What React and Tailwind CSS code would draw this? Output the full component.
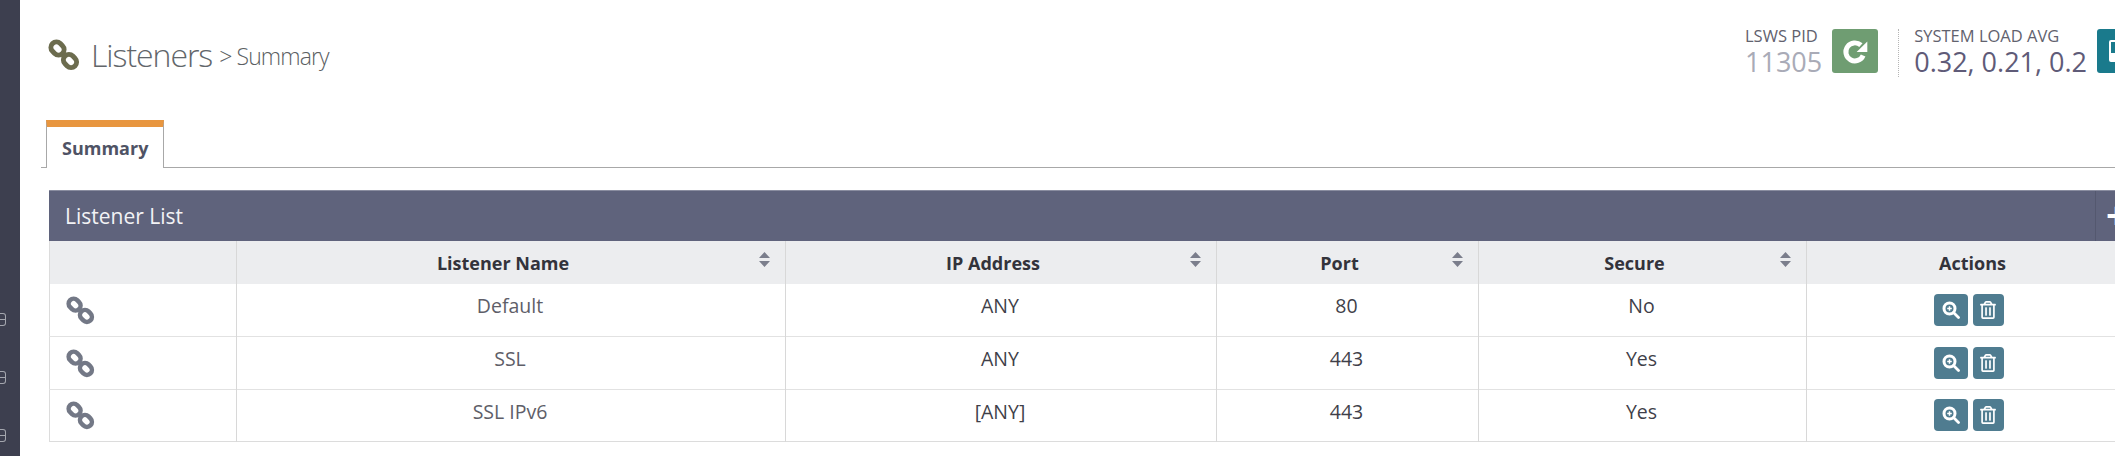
import { FaRegTrashAlt } from 'react-icons/fa';

const listeners = [
  { name: 'Default', ip: 'ANY', port: '80', secure: 'No' },
  { name: 'SSL', ip: 'ANY', port: '443', secure: 'Yes' },
  { name: 'SSL IPv6', ip: '[ANY]', port: '443', secure: 'Yes' },
];

function LinkIcon({ className }) {
  return (
    <svg viewBox="0 0 32 32" className={className} fill="none" stroke="currentColor" strokeWidth="5">
      <rect x="2.5" y="4" width="14" height="11" rx="5.5" transform="rotate(45 9.5 9.5)" />
      <rect x="15" y="16.5" width="14" height="11" rx="5.5" transform="rotate(45 22 22)" />
    </svg>
  );
}

function RefreshIcon() {
  return (
    <svg viewBox="0 0 24 24" className="h-[27px] w-[27px]">
      <path d="M18.8 15.5A8 8 0 1 1 16.8 6.4" fill="none" stroke="white" strokeWidth="4.4" />
      <path d="M22.5 3v9.5H13z" fill="white" />
    </svg>
  );
}

function SortIcon() {
  return (
    <svg viewBox="0 0 11 15" className="absolute right-[15px] top-[11px] h-[15px] w-[11px] fill-[#7b7e8c]">
      <path d="M5.5 0 11 6H0zM0 9h11l-5.5 6z" />
    </svg>
  );
}

function ZoomIcon() {
  return (
    <svg viewBox="0 0 18 18" className="h-[18px] w-[18px]" fill="none" stroke="white">
      <circle cx="7.5" cy="7.5" r="5.5" strokeWidth="3" />
      <path d="M5.2 7.5h4.6M7.5 5.2v4.6" strokeWidth="1.5" />
      <path d="m11.5 11.5 5 5" strokeWidth="2.8" strokeLinecap="round" />
    </svg>
  );
}

function SidebarIcon() {
  return (
    <div className="flex h-[13px] w-[6px] items-center rounded-r-[3px] border-y border-r border-[#a4a6ae]">
      <div className="h-px w-[5px] bg-[#a4a6ae]"></div>
    </div>
  );
}

export default function App() {
  return (
    <div className="flex h-[456px] w-[2115px] overflow-hidden bg-white font-['Open_Sans',sans-serif] text-[#4d4d57]">
      <aside className="flex w-[20px] shrink-0 flex-col gap-[45px] bg-[#3d3f4f] pt-[313px]">
        <SidebarIcon />
        <SidebarIcon />
        <SidebarIcon />
      </aside>

      <main className="w-[2130px] shrink-0">
        <header className="flex h-[120px] items-start justify-between pl-[28px] pr-[7px]">
          <div className="flex items-center pt-[35px]">
            <LinkIcon className="h-[32px] w-[32px] text-[#6c6c4e]" />
            <h1 className="ml-[11px] text-[32px] font-light leading-[40px] tracking-[-1.05px] text-[#62666a]">Listeners</h1>
            <span className="ml-[7px] mt-[3px] text-[23px] font-light tracking-[-0.9px] text-[#5c5f63]">&gt; Summary</span>
          </div>

          <div className="flex items-start pt-[26px]">
            <div className="flex flex-col">
              <span className="text-[16.5px] leading-[20px] text-[#62626e]">LSWS PID</span>
              <span className="text-[27px] leading-[32px] text-[#a9abb7]">11305</span>
            </div>
            <button className="ml-[10px] mt-[3px] flex h-[44px] w-[46px] items-center justify-center rounded-[3px] bg-[#6f9d72]">
              <RefreshIcon />
            </button>
            <div className="ml-[20px] mt-[3px] h-[48px] border-l border-dotted border-[#b5b5b5]"></div>
            <div className="ml-[15px] flex flex-col">
              <span className="text-[16.5px] leading-[20px] text-[#62626e]">SYSTEM LOAD AVG</span>
              <span className="text-[27px] leading-[32px] text-[#5f5b78]">0.32, 0.21, 0.2</span>
            </div>
            <button className="ml-[10px] mt-[3px] flex h-[44px] w-[46px] items-center justify-center rounded-[3px] bg-[#1a7a8c]">
              <div className="flex h-[22px] w-[22px] flex-col justify-end rounded-[2px] border-2 border-white">
                <div className="h-[7px] w-[12px] bg-white"></div>
              </div>
            </button>
          </div>
        </header>

        <div className="ml-[21px] h-[48px] border-b border-[#a8a8a8] pl-[5px]">
          <div className="h-[48px] w-[118px] border-x border-[#a8a8a8] border-t-[7px] border-t-[#e8963f] bg-white pl-[15px] pt-[6px] text-[18px] font-bold leading-[30px] text-[#4f5365]">
            Summary
          </div>
        </div>

        <section className="ml-[29px] mt-[22px] w-[2089px]">
          <div className="flex h-[51px] items-center justify-between border-t border-[#8a8da0] bg-[#5f637c] pl-[16px] text-[21px] text-[#f2f2f5]">
            <span className="pt-[1px]">Listener List</span>
            <div className="flex h-full w-[43px] items-center border-l border-[#54586f] pb-[4px] pl-[10px] text-[38px] font-bold leading-none text-white">+</div>
          </div>
          <table className="w-full table-fixed border-collapse border-b border-l border-[#dcdcdc] text-center text-[19.5px] text-[#3f3f49]">
            <thead>
              <tr className="h-[43px] bg-[#ecedef] text-[18px] font-bold text-[#33333b]">
                <th className="w-[187px] border-r border-[#d8d8d8]"></th>
                <th className="relative w-[549px] border-r border-[#d8d8d8] pr-[16px] pt-[1px]">Listener Name<SortIcon /></th>
                <th className="relative w-[431px] border-r border-[#d8d8d8] pr-[16px] pt-[1px]">IP Address<SortIcon /></th>
                <th className="relative w-[262px] border-r border-[#d8d8d8] pr-[16px] pt-[1px]">Port<SortIcon /></th>
                <th className="relative w-[328px] border-r border-[#d8d8d8] pr-[16px] pt-[1px]">Secure<SortIcon /></th>
                <th className="pt-[1px]">Actions</th>
              </tr>
            </thead>
            <tbody>
              {listeners.map((l) => (
                <tr key={l.name} className="h-[52.5px] border-b border-[#e2e2e2] last:border-b-0">
                  <td className="border-r border-[#d8d8d8] pl-[16px] pt-[1px]">
                    <LinkIcon className="h-[29px] w-[29px] text-[#737886]" />
                  </td>
                  <td className="border-r border-[#d8d8d8] pb-[8px] pr-[2px] text-[#5e5e68]">{l.name}</td>
                  <td className="border-r border-[#d8d8d8] pb-[8px] pr-[2px]">{l.ip}</td>
                  <td className="border-r border-[#d8d8d8] pb-[8px] pr-[2px]">{l.port}</td>
                  <td className="border-r border-[#d8d8d8] pb-[8px] pr-[2px]">{l.secure}</td>
                  <td>
                    <div className="flex justify-center gap-[5px] pr-[8px]">
                      <button className="flex h-[32px] w-[34px] items-center justify-center rounded-[4px] bg-[#4f7c90]">
                        <ZoomIcon />
                      </button>
                      <button className="flex h-[32px] w-[31px] items-center justify-center rounded-[4px] bg-[#4f7c90] text-white">
                        <FaRegTrashAlt className="h-[18px] w-[18px]" />
                      </button>
                    </div>
                  </td>
                </tr>
              ))}
            </tbody>
          </table>
        </section>
      </main>
    </div>
  );
}
